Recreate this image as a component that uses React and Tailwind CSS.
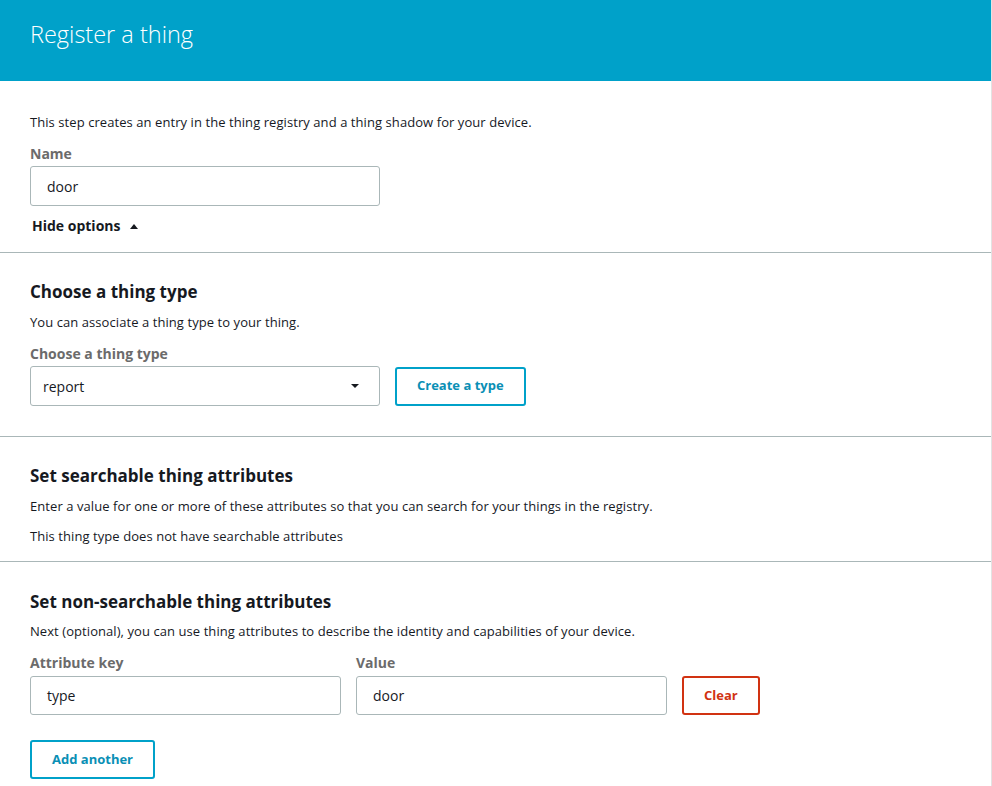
import React from 'react';

const font = { fontFamily: '"Open Sans", "Liberation Sans", sans-serif' };

const Label = ({ children, className = '' }) => (
  <div className={`text-[14px] font-bold text-[#6b6b6b] leading-[20px] ${className}`}>{children}</div>
);

const Input = ({ value, className = '' }) => (
  <div
    className={`h-[39px] border border-[#aab7b8] rounded-[3px] flex items-center px-4 text-[14px] text-[#16191f] ${className}`}
  >
    {value}
  </div>
);

const OutlineButton = ({ children, danger }) => (
  <button
    className={`h-[39px] px-5 rounded-[3px] border-2 bg-white text-[13px] font-bold ${
      danger ? 'border-[#d13212] text-[#d13212]' : 'border-[#00a1c9] text-[#0a8fb5]'
    }`}
  >
    {children}
  </button>
);

const SectionTitle = ({ children }) => (
  <h2 className="text-[17px] font-bold text-[#16191f] leading-[24px]">{children}</h2>
);

const Para = ({ children, className = '' }) => (
  <p className={`text-[13px] tracking-[0.07px] text-[#16191f] leading-[20px] ${className}`}>{children}</p>
);

export default function App() {
  return (
    <div style={font} className="w-[992px] min-h-[786px] bg-white border-r border-[#e3e3e3]">
      {/* Header */}
      <div className="h-[81px] bg-[#00a1c9] px-[30px] pt-[18px]">
        <h1 className="text-[23.5px] font-light text-white leading-[32px]">Register a thing</h1>
      </div>

      {/* Name */}
      <div className="px-[30px] pt-[31px] pb-[16px] border-b border-[#aab7b8]">
        <Para>This step creates an entry in the thing registry and a thing shadow for your device.</Para>
        <div className="mt-[12px]">
          <Label className="mb-[2px]">Name</Label>
          <Input value="door" className="w-[350px] h-[40px]" />
        </div>
        <button className="mt-[10px] ml-[2px] flex items-center gap-[10px] text-[14px] font-bold text-[#16191f] leading-[20px]">
          Hide options
          <span className="w-0 h-0 border-l-[4px] border-r-[4px] border-b-[5px] border-l-transparent border-r-transparent border-b-[#16191f]" />
        </button>
      </div>

      {/* Thing type */}
      <div className="px-[30px] pt-[27px] pb-[30px] border-b border-[#aab7b8]">
        <SectionTitle>Choose a thing type</SectionTitle>
        <Para className="mt-[8px]">You can associate a thing type to your thing.</Para>
        <div className="mt-[12px]">
          <Label className="mb-[2px]">Choose a thing type</Label>
          <div className="flex items-center gap-[15px]">
            <div className="w-[350px] h-[40px] border border-[#aab7b8] rounded-[3px] flex items-center justify-between pl-[12px] pr-[20px] text-[14px] text-[#16191f]">
              report
              <span className="w-0 h-0 border-l-[4px] border-r-[4px] border-t-[4px] border-l-transparent border-r-transparent border-t-[#16191f]" />
            </div>
            <OutlineButton>Create a type</OutlineButton>
          </div>
        </div>
      </div>

      {/* Searchable */}
      <div className="px-[30px] pt-[27px] pb-[15px] border-b border-[#aab7b8]">
        <SectionTitle>Set searchable thing attributes</SectionTitle>
        <Para className="mt-[8px]">
          Enter a value for one or more of these attributes so that you can search for your things in the registry.
        </Para>
        <Para className="mt-[10px]">This thing type does not have searchable attributes</Para>
      </div>

      {/* Non-searchable */}
      <div className="px-[30px] pt-[28px]">
        <SectionTitle>Set non-searchable thing attributes</SectionTitle>
        <Para className="mt-[7px]">
          Next (optional), you can use thing attributes to describe the identity and capabilities of your device.
        </Para>
        <div className="mt-[12px] flex items-end gap-[15px]">
          <div>
            <Label className="mb-[3px]">Attribute key</Label>
            <Input value="type" className="w-[311px]" />
          </div>
          <div>
            <Label className="mb-[3px]">Value</Label>
            <Input value="door" className="w-[311px]" />
          </div>
          <OutlineButton danger>Clear</OutlineButton>
        </div>
        <div className="mt-[25px]">
          <OutlineButton>Add another</OutlineButton>
        </div>
      </div>
    </div>
  );
}
